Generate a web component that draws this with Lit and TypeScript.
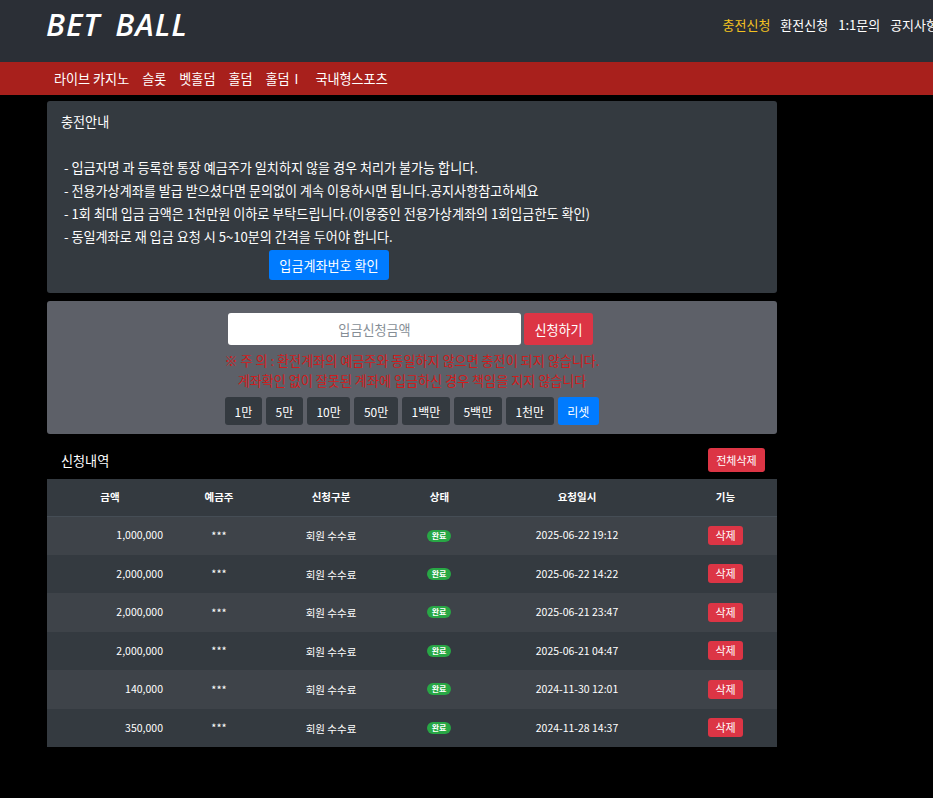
import { LitElement, html, css } from "lit";
import { customElement } from "lit/decorators.js";

const NOTICES = [
  "- 입금자명 과 등록한 통장 예금주가 일치하지 않을 경우 처리가 불가능 합니다.",
  "- 전용가상계좌를 발급 받으셨다면 문의없이 계속 이용하시면 됩니다.공지사항참고하세요",
  "- 1회 최대 입금 금액은 1천만원 이하로 부탁드립니다.(이용중인 전용가상계좌의 1회입금한도 확인)",
  "- 동일계좌로 재 입금 요청 시 5~10분의 간격을 두어야 합니다.",
];

const AMOUNTS = ["1만", "5만", "10만", "50만", "1백만", "5백만", "1천만"];

const ROWS = [
  ["1,000,000", "2025-06-22 19:12"],
  ["2,000,000", "2025-06-22 14:22"],
  ["2,000,000", "2025-06-21 23:47"],
  ["2,000,000", "2025-06-21 04:47"],
  ["140,000", "2024-11-30 12:01"],
  ["350,000", "2024-11-28 14:37"],
];

@customElement("app-root")
export class AppRoot extends LitElement {
  static styles = css`
    :host {
      display: block;
      min-height: 798px;
      background: #000;
      color: #fff;
      overflow: hidden;
      font-family: "Noto Sans CJK KR", "Noto Sans", sans-serif;
      font-size: 13.1px;
    }

    .top {
      height: 62px;
      background: #2b2f36;
      display: flex;
      justify-content: space-between;
      padding-left: 46px;
      white-space: nowrap;
    }

    .logo {
      font-family: "Open Sans", sans-serif;
      font-style: italic;
      font-weight: 600;
      font-size: 31px;
      line-height: 48px;
      letter-spacing: 1px;
      word-spacing: 6px;
      color: #fff;
    }

    .top-links {
      display: flex;
      gap: 10px;
      height: 48px;
      align-items: center;
      margin-right: -5px;
      font-size: 13px;
    }

    .top-links .on {
      color: #f3c221;
    }

    .menu {
      height: 33px;
      background: #a8201c;
      display: flex;
      align-items: center;
      padding-left: 54px;
      gap: 13px;
    }

    .menu .wide {
      word-spacing: 2px;
    }

    .menu .gap {
      margin-left: 4px;
    }

    .wrap {
      width: 730px;
      margin-left: 47px;
      padding-top: 6px;
    }

    .card {
      background: #343a40;
      border-radius: 3px;
    }

    .guide {
      height: 192px;
      padding: 11px 14px 0;
      box-sizing: border-box;
      margin-bottom: 8px;
    }

    .guide h4 {
      margin: 0 0 24px;
      font-size: inherit;
      font-weight: 400;
      line-height: 20px;
    }

    .guide p {
      margin: 0 0 0 3px;
      line-height: 23px;
    }

    .btn {
      border: 0;
      border-radius: 3px;
      color: #fff;
      font: inherit;
      padding: 0;
    }

    .primary {
      background: #007bff;
    }

    .danger {
      background: #dc3545;
    }

    .account {
      display: block;
      width: 120px;
      height: 30px;
      margin: 2px 0 0 208px;
    }

    .apply {
      background: #5d6068;
      border-radius: 3px;
      height: 133px;
      padding-top: 12px;
      box-sizing: border-box;
      margin-bottom: 14px;
    }

    .apply-row {
      display: flex;
      justify-content: center;
      gap: 3px;
      padding-right: 3px;
    }

    .amount {
      width: 293px;
      height: 32px;
      background: #fff;
      border-radius: 3px;
      color: #868e96;
      display: flex;
      align-items: center;
      justify-content: center;
    }

    .submit {
      width: 69px;
      height: 32px;
    }

    .warn {
      margin: 6px 0;
      text-align: center;
      color: #d01c1c;
      line-height: 20px;
    }

    .amounts {
      display: flex;
      justify-content: center;
      gap: 4px;
    }

    .amounts .btn {
      height: 28px;
      padding: 0 9.6px;
      font-size: 12px;
      background: #343a40;
    }

    .amounts .primary {
      background: #007bff;
    }

    .list-head {
      display: flex;
      justify-content: space-between;
      align-items: center;
      height: 24px;
      padding: 0 12px 0 14px;
      margin-bottom: 7px;
    }

    .clear {
      width: 57px;
      height: 24px;
      font-size: 11px;
    }

    table {
      width: 730px;
      border-collapse: collapse;
      table-layout: fixed;
      font-size: 10.5px;
      line-height: 1;
    }

    th,
    td {
      box-sizing: border-box;
      padding: 0;
      background: #343a40;
    }

    th {
      height: 37px;
      font-weight: 700;
      border-bottom: 1px solid #454d55;
    }

    td {
      height: 38.5px;
      text-align: center;
    }

    tbody tr:nth-child(odd) td {
      background: #3e4349;
    }

    .c1 { width: 126px; }
    .c2 { width: 92px; }
    .c3 { width: 132px; }
    .c4 { width: 85px; }
    .c5 { width: 190px; }
    .c6 { width: 105px; }

    .func {
      padding-left: 2px;
    }

    td.money {
      text-align: right;
      padding-right: 10px;
    }

    td.mask {
      font-size: 11px;
    }

    td.kind {
      padding-top: 2px;
    }

    .badge {
      display: inline-block;
      background: #28a745;
      border-radius: 6px;
      width: 24px;
      height: 12px;
      margin-right: 1px;
      line-height: 12px;
      font-size: 8px;
      font-weight: 700;
      vertical-align: middle;
    }

    .del {
      display: inline-block;
      width: 35px;
      height: 19px;
      line-height: 19px;
      font-size: 11px;
      vertical-align: middle;
    }
  `;

  render() {
    return html`
      <div class="top">
        <div class="logo">BET BALL</div>
        <div class="top-links">
          <span class="on">충전신청</span>
          <span>환전신청</span>
          <span>1:1문의</span>
          <span>공지사항</span>
        </div>
      </div>
      <div class="menu">
        <span>라이브 카지노</span>
        <span>슬롯</span>
        <span>벳홀덤</span>
        <span>홀덤</span>
        <span class="wide">홀덤 I</span>
        <span class="gap">국내형스포츠</span>
      </div>
      <div class="wrap">
        <div class="card guide">
          <h4>충전안내</h4>
          ${NOTICES.map((n) => html`<p>${n}</p>`)}
          <button class="btn primary account">입금계좌번호 확인</button>
        </div>
        <div class="apply">
          <div class="apply-row">
            <div class="amount">입금신청금액</div>
            <button class="btn danger submit">신청하기</button>
          </div>
          <div class="warn">
            ※ 주 의 : 환전계좌의 예금주와 동일하지 않으면 충전이 되지 않습니다.<br />
            계좌확인 없이 잘못된 계좌에 입금하신 경우 책임을 지지 않습니다
          </div>
          <div class="amounts">
            ${AMOUNTS.map((a) => html`<button class="btn">${a}</button>`)}
            <button class="btn primary">리셋</button>
          </div>
        </div>
        <div class="list-head">
          <span>신청내역</span>
          <button class="btn danger clear">전체삭제</button>
        </div>
        <table>
          <thead>
            <tr>
              <th class="c1">금액</th>
              <th class="c2">예금주</th>
              <th class="c3">신청구분</th>
              <th class="c4">상태</th>
              <th class="c5">요청일시</th>
              <th class="c6 func">기능</th>
            </tr>
          </thead>
          <tbody>
            ${ROWS.map(
              ([money, date]) => html`
                <tr>
                  <td class="money">${money}</td>
                  <td class="mask">***</td>
                  <td class="kind">회원 수수료</td>
                  <td><span class="badge">완료</span></td>
                  <td>${date}</td>
                  <td class="func"><button class="btn danger del">삭제</button></td>
                </tr>
              `
            )}
          </tbody>
        </table>
      </div>
    `;
  }
}
